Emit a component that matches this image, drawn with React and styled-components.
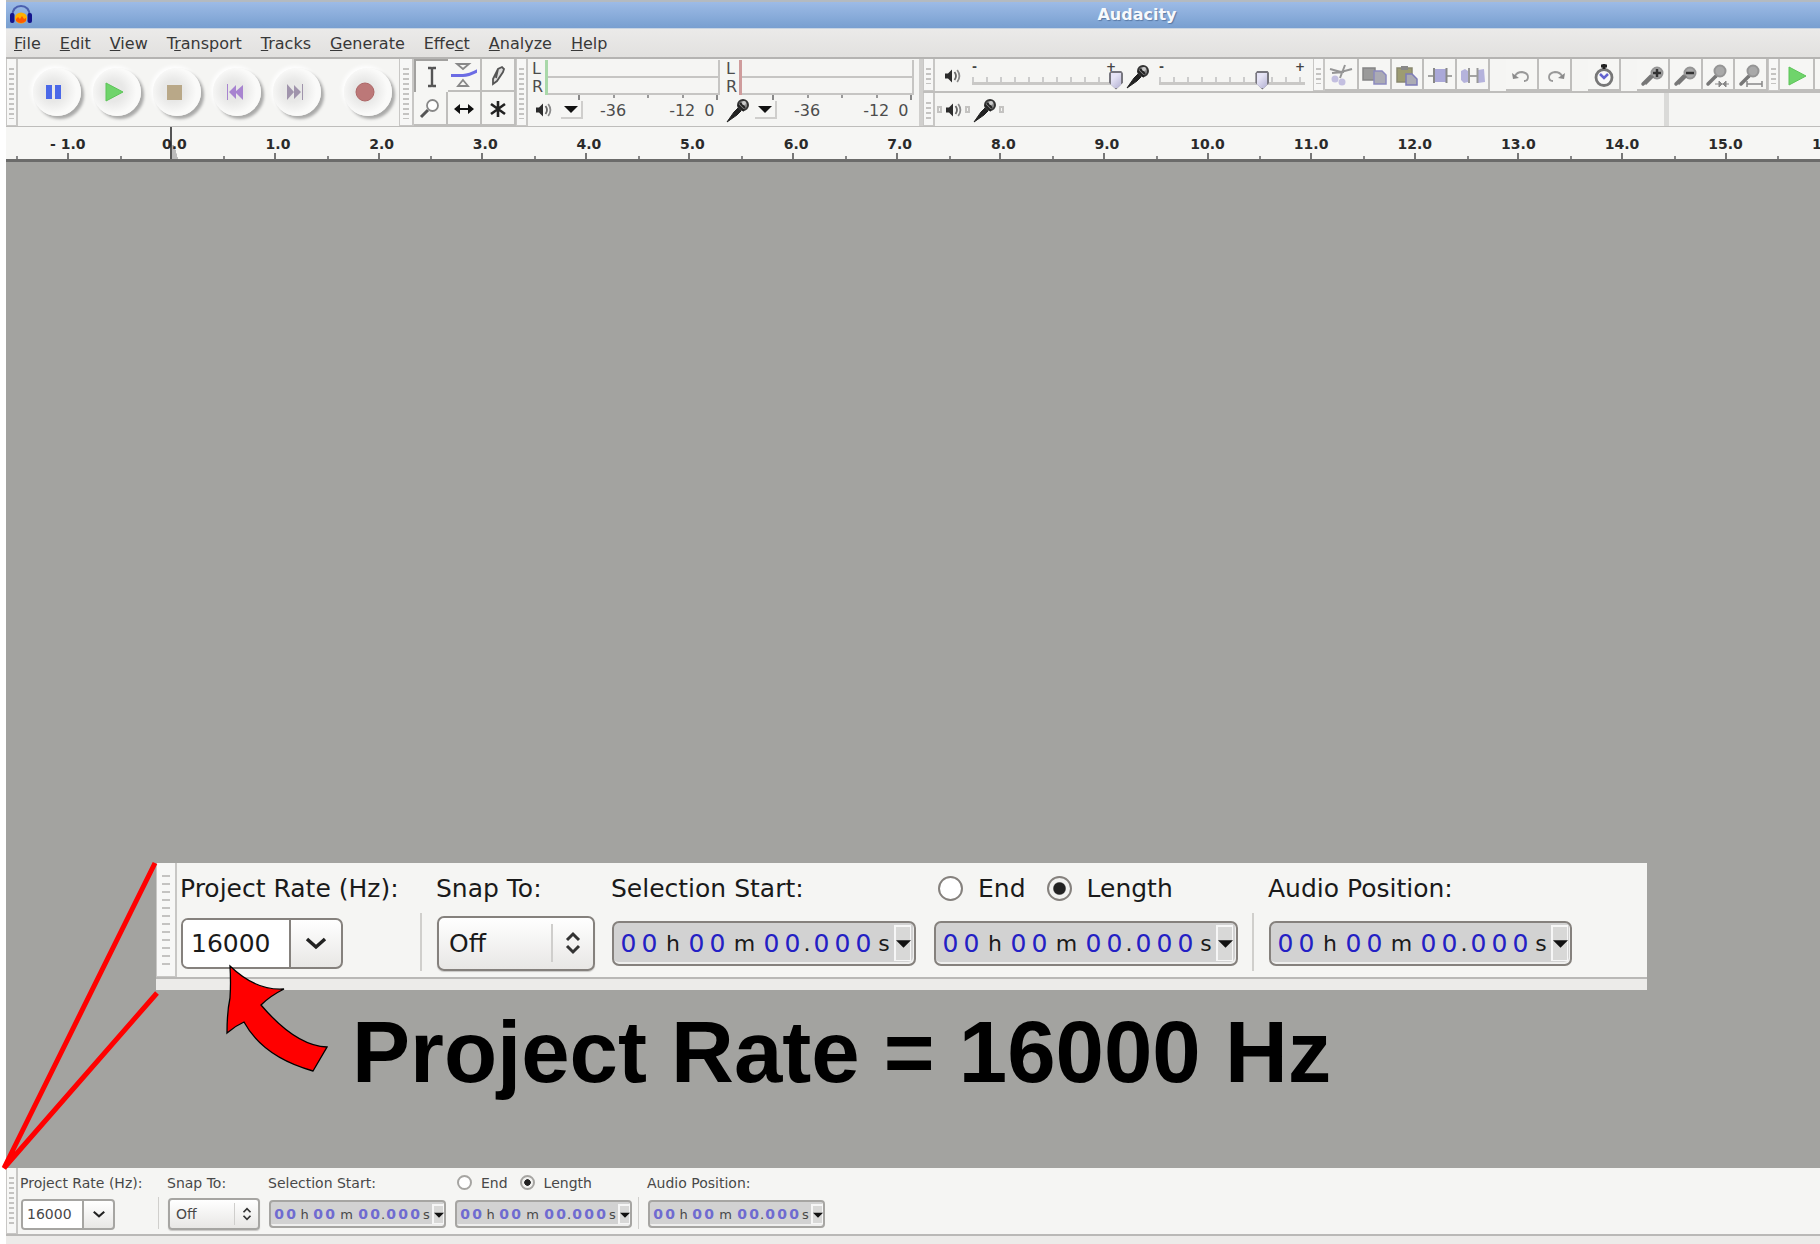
import React from 'react';
import styled, { createGlobalStyle, css, ThemeProvider } from 'styled-components';

const GlobalStyle = createGlobalStyle`
  * {
    box-sizing: border-box;
  }
  body {
    margin: 0;
    background: #fff;
    font-family: "DejaVu Sans", sans-serif;
  }
  button, input, select {
    font-family: inherit;
    color: inherit;
    margin: 0;
    padding: 0;
  }
  svg {
    display: block;
    flex: none;
  }
`;

// sizes for the docked selection bar and its enlarged copy
const small = {
  font: 14, unit: 13, text: '#484848', blue: '#6f6bd0', weight: 'bold', edge: '#a6a5a2',
  grip: 12, gripInset: 2, pad: 2, labelRow: 29, controlRow: 34, body: 66, status: 8,
  rate: 138, snap: 101, start: 186, length: 184, gap: 8, line: 1,
  combo: 94, comboH: 31, comboBtn: 31, select: 92, selectH: 32, selectIcon: 24, inset: 5,
  time: 177, timeH: 28, timePad: 2, digit: 12, h: 15, m: 21, dot: 4, s: 11, timeBtn: 12,
  radio: 15, radioPad: 3, radioGap: 9, radioSpace: 12, radius: 4, icon: 14,
};

const large = {
  font: 25, unit: 22, text: '#1a1a1a', blue: '#2420c4', weight: 'normal', edge: '#85817d',
  grip: 21, gripInset: 5, pad: 3, labelRow: 50, controlRow: 60, body: 114, status: 11,
  rate: 240, snap: 175, start: 322, length: 319, gap: 14, line: 2,
  combo: 162, comboH: 51, comboBtn: 52, select: 158, selectH: 55, selectIcon: 42, inset: 9,
  time: 304, timeH: 45, timePad: 4, digit: 21, h: 26, m: 33, dot: 8, s: 20, timeBtn: 17,
  radio: 25, radioPad: 5, radioGap: 15, radioSpace: 21, radius: 7, icon: 24,
};

/* ---------- icons ---------- */

const Speaker = () => (
  <svg width="18" height="16" viewBox="0 0 18 16">
    <path d="M1 5.500h3L8 1.500v13L4 10.500H1z" fill="#2b2b2b" />
    <path d="M10.500 4q3 4 0 8" fill="none" stroke="#666" strokeWidth="1.800" />
    <path d="M13.200 2q4.400 6 0 12" fill="none" stroke="#8b8b8b" strokeWidth="1.800" />
  </svg>
);

const Mic = () => (
  <svg width="24" height="26" viewBox="0 0 24 26">
    <path d="M1 25L8 15l4-4 3 3-4 4z" fill="#222" stroke="#222" />
    <circle cx="17" cy="8" r="5" fill="#888" stroke="#333" strokeWidth="2" />
    <path d="M12 8l6 6M14 6l5 5" stroke="#222" strokeWidth="2" />
    <circle cx="18" cy="6" r="2" fill="#ccc" />
  </svg>
);

const Lens = ({ sign, foot }) => (
  <svg width="26" height="26" viewBox="0 0 26 26">
    <path d="M3 21l8-8" stroke="#777" strokeWidth="3.500" strokeLinecap="round" />
    <circle cx={sign ? 17 : 15} cy={sign ? 10 : 8} r="5.500" fill="#a9a9a9" stroke="#959595" strokeWidth="2" />
    {sign && <path d="M5 21l8-8" stroke="#777" strokeWidth="3" />}
    {sign && <path d="M13 10h8" stroke="#333" strokeWidth="2.500" />}
    {sign === 'plus' && <path d="M17 6v8" stroke="#333" strokeWidth="2.500" />}
    {foot === 'in' && <path d="M10 21h14M14 18l3 3-3 3zM21 18l-3 3 3 3z" stroke="#888" fill="#888" />}
    {foot === 'out' && <path d="M9 21h15M9 18v6M24 18v6" stroke="#888" strokeWidth="1.500" fill="none" />}
  </svg>
);

const Logo = () => (
  <svg width="24" height="20" viewBox="0 0 24 20">
    <path d="M3 11Q4 1 12 1t9 10" fill="none" stroke="#4a5fae" strokeWidth="2" />
    <ellipse cx="12" cy="13" rx="6" ry="5.500" fill="#ffb000" />
    <path d="M7 14l2-2 2 2 2-3 2 3 2-1v3q-5 4-10 0z" fill="#ff5a00" />
    <rect x="1" y="8" width="4.500" height="10" rx="2" fill="#14148c" />
    <rect x="18.500" y="8" width="4.500" height="10" rx="2" fill="#14148c" />
  </svg>
);

const transportIcons = {
  Pause: <path d="M3 4h6v14H3zM12 4h6v14h-6z" fill="#4a68e8" />,
  Play: <path d="M3 2v18l17-9z" fill="#6fd46b" stroke="#5cc458" />,
  Stop: <path d="M4 4h15v15H4z" fill="#b9a888" />,
  'Skip to Start': (
    <g fill="#a884d0">
      <path d="M4 3h1v16H4zM13 4v14l-7-7zM20 4v15l-8-8z" />
    </g>
  ),
  'Skip to End': (
    <g fill="#a094ac">
      <path d="M4 3v16l7-8zM11 4v14l7-7zM19 3h1v16h-1z" />
    </g>
  ),
  Record: <circle cx="11" cy="11" r="9" fill="#bc7878" stroke="#ad6666" />,
};

const toolIcons = {
  'Selection Tool': <path d="M9 4h3l1 1 1-1h3M9 22h3l1-1 1 1h3M13 5v16" stroke="#555" strokeWidth="2.400" fill="none" />,
  'Envelope Tool': (
    <g fill="none">
      <path d="M6 2h12l-6 5zM12 18l5 6H7z" stroke="#888" strokeWidth="1.800" />
      <path d="M-2 13.500h14q6 0 15-5" stroke="#6c6ce4" strokeWidth="3" />
    </g>
  ),
  'Draw Tool': <path d="M8 22v-5l5-10 4-2 2 2-1 3-6 9zM13 7l-2 9" stroke="#555" strokeWidth="1.800" fill="#ddd" />,
  'Zoom Tool': (
    <g>
      <path d="M4 22l7-7" stroke="#555" strokeWidth="3" />
      <circle cx="15.500" cy="10.500" r="5.500" fill="#fff" stroke="#888" strokeWidth="1.800" />
    </g>
  ),
  'Time Shift Tool': <path d="M3 14l6-5v4h8V9l6 5-6 5v-4H9v4z" fill="#111" />,
  'Multi-Tool': <path d="M13 6v16M6 9l14 10M20 9L6 19" stroke="#222" strokeWidth="2.600" />,
};

const editIcons = {
  Cut: (
    <g>
      <path d="M2 6l11 3 11-3M17 2l-5 13M4 10l12-1" stroke="#969696" strokeWidth="2" fill="none" />
      <circle cx="7" cy="16" r="3.500" fill="#c3bfe0" />
      <circle cx="14" cy="19" r="3.500" fill="#c3bfe0" />
    </g>
  ),
  Copy: (
    <g strokeWidth="1.500">
      <path d="M1 5h12v12H1z" fill="#9a9a9a" stroke="#858585" />
      <path d="M12 8h8l4 4v9H12z" fill="#ababb4" stroke="#8c8abf" />
    </g>
  ),
  Paste: (
    <g strokeWidth="1.500">
      <path d="M3 5h15v14H3z" fill="#9d9c72" stroke="#8a8970" />
      <path d="M7 3h7v4H7z" fill="#888" />
      <path d="M12 11h6l5 5v6H12z" fill="#ababb4" stroke="#7e7cb8" />
    </g>
  ),
  Trim: (
    <g>
      <path d="M1 13h24" stroke="#888" strokeWidth="1.500" />
      <path d="M8 6h11v13H8z" fill="#aaa8d8" />
      <path d="M7 5v15M19.500 5v15" stroke="#888" strokeWidth="2" />
    </g>
  ),
  Silence: (
    <g>
      <path d="M1 8l4-2 3 2v11l-4 1-3-3zM18 7l6-1 1 13-7 1z" fill="#b5b3dc" />
      <path d="M9 13h8" stroke="#888" strokeWidth="1.500" />
      <path d="M9 5v15M17.500 5v15" stroke="#999" strokeWidth="2" />
    </g>
  ),
  Undo: (
    <g>
      <path d="M6 13q2-4 7-4 6 1 6 5t-4 4" stroke="#999" strokeWidth="1.800" fill="none" />
      <path d="M3 10l1 6 6-1z" fill="#8a8a8a" />
    </g>
  ),
  Redo: (
    <g>
      <path d="M20 13q-2-4-7-4-6 1-6 5t4 4" stroke="#999" strokeWidth="1.800" fill="none" />
      <path d="M23 10l-1 6-6-1z" fill="#8a8a8a" />
    </g>
  ),
  'Sync-Lock': (
    <g>
      <circle cx="13" cy="14.500" r="8" fill="#fafafa" stroke="#777" strokeWidth="2.800" />
      <path d="M13 1v5M10 3h6" stroke="#222" strokeWidth="3" />
      <path d="M9 11l4 4 4-4" stroke="#6464d0" strokeWidth="2.500" fill="none" />
    </g>
  ),
};

/* ---------- window frame ---------- */

const Window = styled.div`
  min-height: 100vh;
  display: flex;
  flex-direction: column;
  padding-left: 6px;
  overflow: hidden;
`;

const TitleBar = styled.header`
  display: flex;
  align-items: center;
  height: 29px;
  padding-left: 3px;
  border-top: 2px solid #b4bac0;
  border-bottom: 1px solid #c8d4e2;
  background: linear-gradient(#9dbbe6, #789fd0);
`;

const Title = styled.h1`
  flex: 1;
  margin: 0 0 0 421px;
  font-size: 16px;
  line-height: 24px;
  text-align: center;
  color: #f7f9fc;
  text-shadow: 1px 1px 1px #5878a4;
`;

const MenuBar = styled.nav`
  display: flex;
  gap: 19px;
  height: 30px;
  padding-left: 8px;
  background: linear-gradient(#ebeae9, #e2e1df);
  border-bottom: 2px solid #b5b4b2;
`;

const MenuItem = styled.button`
  border: 0;
  padding-top: 2px;
  background: none;
  font-size: 16px;
  line-height: 26px;
  color: #383838;
  white-space: nowrap;
`;

const Toolbars = styled.div`
  display: flex;
  height: 68px;
  background: #f5f5f3;
  border-bottom: 1px solid #bebdbb;
  overflow: hidden;
`;

const Grip = styled.div`
  flex: none;
  width: ${p => p.$width || 12}px;
  padding: 6px ${p => p.$inset || 2}px;
  border: 1px solid #c8c7c5;
  border-width: 0 2px 1px 1px;
  background: repeating-linear-gradient(#f7f7f6 0 ${p => p.$step - 2 || 3}px, #c4c3c1 0 ${p => p.$step || 5}px) content-box, #f7f7f6;
`;

const Transport = styled.div`
  display: flex;
  flex: none;
  align-items: center;
  width: 381px;
  padding: 0 0 1px 9px;
`;

const RoundButton = styled.button`
  display: grid;
  place-items: center;
  width: 48px;
  height: 48px;
  margin: 0 6px;
  padding-right: 6px;
  border: 0;
  border-radius: 50%;
  background: radial-gradient(circle at 42% 48%, #e8e8e7 0 28%, #fafaf9 62%);
  box-shadow: 3px 3px 3px #a9a9a8, -2px -2px 4px #fff;

  &:last-child {
    margin-left: 17px;
  }
`;

const ToolGrid = styled.div`
  display: grid;
  flex: none;
  grid-template-columns: repeat(3, 34px);
  grid-template-rows: 33px 34px;
`;

const ToolButton = styled.button`
  display: grid;
  flex: none;
  place-items: center;
  width: ${p => p.$width || 34}px;
  border: 0 solid #bfbebc;
  border-width: 0 2px 2px 0;
  background: #f6f6f4;
  overflow: hidden;

  ${p => p.$pressed && css`
    border-width: 2px 0 0 2px;
    border-color: #a2a19f;
  `}
`;

/* ---------- meters ---------- */

const Meter = styled.div`
  display: grid;
  flex: none;
  grid-template-columns: 16px 172px;
  grid-template-rows: 18px 17px 30px;
  width: 194px;
  padding: 1px 0 0 4px;
  color: #4c4c4c;
  font-size: 16px;
`;

const Channel = styled.span`
  line-height: 17px;
  border-right: 3px solid ${p => p.$color};
`;

const Level = styled.div`
  border: 1px solid #c6c5c3;
  border-width: 0 2px 2px 0;
`;

const Scale = styled.div`
  grid-column: 1 / -1;
  display: flex;
  align-items: center;
  gap: 5px;
  background:
    linear-gradient(#888, #888) 46px 0 / 2px 5px no-repeat,
    linear-gradient(#999, #999) 81px 0 / 2px 3px no-repeat,
    linear-gradient(#999, #999) 115px 0 / 2px 3px no-repeat,
    linear-gradient(#999, #999) 150px 0 / 2px 3px no-repeat,
    linear-gradient(#888, #888) 184px 0 / 2px 5px no-repeat;
`;

const IconSlot = styled.span`
  display: grid;
  place-items: center;
  width: 24px;
`;

const DropButton = styled.button`
  display: grid;
  place-items: center;
  width: 22px;
  height: 18px;
  border: 0 solid #cfcecc;
  border-width: 0 2px 2px 0;
  background: #f6f6f4;
`;

const ScaleText = styled.span`
  margin-left: ${p => p.$gap}px;
`;

/* ---------- mixer and editing rows ---------- */

const Rows = styled.div`
  flex: 1;
  min-width: 0;
  display: grid;
  grid-template-rows: 34px 33px;
  margin-left: 3px;
  border-left: 4px solid #d0cfcd;
`;

const Row = styled.div`
  display: flex;
  min-width: 0;
  overflow: hidden;
  border-bottom: ${p => p.$line ? '2px solid #bfbebc' : 0};

  ${ToolButton} {
    padding-top: 3px;
  }
`;

const Mixer = styled.div`
  display: flex;
  align-items: center;
  flex: none;
  width: 378px;
  padding: 2px 0 0 9px;
`;

const SliderBox = styled.div`
  display: flex;
  flex-direction: column;
  width: ${p => p.$width}px;
  margin: 0 ${p => p.$after}px 0 ${p => p.$gap}px;
`;

const SliderSigns = styled.div`
  display: flex;
  justify-content: space-between;
  height: 8px;
  padding-right: ${p => p.$right}px;
  font-size: 12px;
  font-weight: bold;
  line-height: 8px;
  color: #444;
`;

const Slider = styled.input`
  appearance: none;
  width: 100%;
  height: 19px;
  background:
    linear-gradient(#c9c8c6, #c9c8c6) 0 11px / ${p => p.$track}px 3px no-repeat,
    repeating-linear-gradient(90deg, #ccc 0 2px, transparent 0 14px) 0 6px / ${p => p.$track}px 5px no-repeat;

  &::-webkit-slider-thumb {
    appearance: none;
    width: 14px;
    height: 19px;
    background: linear-gradient(135deg, #e6e4f6 30%, #b4b2d2) content-box, #77767e;
    padding: 2px;
    clip-path: polygon(15% 0, 85% 0, 100% 15%, 100% 65%, 50% 100%, 0 65%, 0 15%);
  }
`;

const Gap = styled.div`
  flex: none;
  width: 16px;
`;

const Notch = styled.span`
  width: 5px;
  height: 7px;
  margin: 0 3px 0 2px;
  border: 2px solid #c4c3c1;
`;

const Devices = styled.div`
  display: flex;
  align-items: center;
  flex: none;
  width: 734px;
  border-right: 5px solid #dadad8;
`;

/* ---------- ruler ---------- */

const Ruler = styled.div`
  height: 35px;
  overflow: hidden;
  background: #f6f6f4;
  border-bottom: 3px solid #6b6b6a;
`;

const RulerCells = styled.div`
  display: grid;
  grid-template-columns: repeat(18, 1fr);
  height: 32px;
  margin: 0 -61px 0 10px;
`;

const RulerCell = styled.div`
  padding: 8px 0 0 ${p => p.$shift ? 6 : 0}px;
  text-align: center;
  font-size: 14px;
  font-weight: bold;
  line-height: 18px;
  color: #2a2a2a;
  background:
    linear-gradient(#888, #888) 0 100% / 2px 3px no-repeat,
    linear-gradient(#777, #777) 50% 100% / 2px 6px no-repeat;

  ${p => p.$cursor && css`
    background:
      linear-gradient(#888, #888) 0 100% / 2px 3px no-repeat,
      linear-gradient(#555, #555) 50% 0 / 2px 100% no-repeat,
      linear-gradient(75deg, #bbb 50%, transparent 52%) calc(50% + 5px) 100% / 8px 14px no-repeat;
  `}
`;

/* ---------- project area ---------- */

const Canvas = styled.main`
  position: relative;
  flex: 1;
  display: flex;
  flex-direction: column;
  justify-content: flex-end;
  background: #a3a3a0;
`;

const Callout = styled.section`
  margin: 0 173px 0 150px;
`;

const Caption = styled.h2`
  margin: 18px 0 72px 346px;
  font: bold 87px/88px "Liberation Sans", sans-serif;
  color: #000;
  white-space: nowrap;
`;

const Annotations = styled.svg`
  position: absolute;
  left: -6px;
  bottom: -4px;
  z-index: 1;
  pointer-events: none;
`;

/* ---------- selection bar ---------- */

const SelectionRow = styled.div`
  display: flex;
  height: ${p => p.theme.body}px;
  background: #f5f5f3;
  font-size: ${p => p.theme.font}px;
  color: ${p => p.theme.text};
`;

const StatusBar = styled.div`
  height: ${p => p.theme.status + 2}px;
  background: #ecebe9;
  border-top: 2px solid #b9b8b6;
`;

const Column = styled.div`
  flex: none;
  width: ${p => p.theme[p.$size]}px;

  &:nth-child(2) {
    margin-left: ${p => p.theme.pad}px;
  }
`;

const LabelRow = styled.div`
  display: flex;
  align-items: center;
  height: ${p => p.theme.labelRow}px;
  white-space: nowrap;
`;

const ControlRow = styled.div`
  display: flex;
  align-items: center;
  height: ${p => p.theme.controlRow}px;
  padding-left: 1px;
`;

const Divider = styled.div`
  flex: none;
  width: ${p => p.theme.line}px;
  height: ${p => p.theme.controlRow - 2}px;
  margin: ${p => p.theme.labelRow}px ${p => p.theme.gap}px 0 0;
  background: #d0cfcc;
`;

const Framed = styled.div`
  display: flex;
  height: ${p => p.theme.comboH}px;
  border: 2px solid ${p => p.theme.edge};
  border-radius: ${p => p.theme.radius}px;
  overflow: hidden;
  background: linear-gradient(#fff, #e8e7e5);
`;

const Combo = styled(Framed)`
  width: ${p => p.theme.combo}px;
`;

const ComboInput = styled.input`
  flex: 1;
  min-width: 0;
  padding-left: ${p => p.theme.inset - 1}px;
  border: 0;
  border-right: 2px solid ${p => p.theme.edge};
  background: #fff;
  font-size: ${p => p.theme.font}px;
`;

const ComboButton = styled.button`
  display: grid;
  place-items: center;
  width: ${p => p.theme.comboBtn - 2}px;
  border: 0;
  background: none;
`;

const SelectFrame = styled(Framed)`
  align-items: center;
  width: ${p => p.theme.select}px;
  height: ${p => p.theme.selectH}px;
  box-shadow: 0 1px 1px #c8c7c5;
`;

const Select = styled.select`
  appearance: none;
  flex: 1;
  min-width: 0;
  height: 100%;
  padding-left: ${p => p.theme.inset + 1}px;
  border: 0;
  background: none;
  font-size: ${p => p.theme.font}px;
`;

const SelectIcon = styled.span`
  display: grid;
  place-items: center;
  width: ${p => p.theme.selectIcon}px;
  height: 76%;
  border-left: ${p => p.theme.line}px solid #cfcecc;
`;

const TimeBox = styled.div`
  display: flex;
  align-items: center;
  width: ${p => p.theme.time}px;
  height: ${p => p.theme.timeH}px;
  padding-left: ${p => p.theme.timePad}px;
  border: 2px solid ${p => p.theme.edge};
  border-radius: ${p => p.theme.radius}px;
  background: #d2d2d2;
  box-shadow: inset -1px -2px 0 #efefee;
`;

const Unit = styled.span`
  flex: none;
  width: ${p => p.theme[p.$size]}px;
  text-align: center;
  font-size: ${p => p.theme.unit}px;

  ${p => p.$size === 'digit' && css`
    font-size: ${p.theme.font}px;
    font-weight: ${p.theme.weight};
    color: ${p.theme.blue};
  `}
`;

const TimeButton = styled.button`
  display: grid;
  place-items: center;
  flex: none;
  width: ${p => p.theme.timeBtn}px;
  height: 86%;
  border: 1px solid #f6f6f6;
  border-width: 2px 1px 1px 2px;
  background: #d8d8d7;
`;

const RadioLabel = styled.label`
  display: flex;
  align-items: center;
  gap: ${p => p.theme.radioGap}px;
  margin-left: ${p => p.theme.radioPad}px;

  &:last-child {
    margin-left: ${p => p.theme.radioSpace}px;
  }
`;

const Radio = styled.input`
  appearance: none;
  flex: none;
  width: ${p => p.theme.radio}px;
  height: ${p => p.theme.radio}px;
  border: 2px solid ${p => p.theme.edge};
  border-radius: 50%;
  background: #fff;

  &:checked {
    background: radial-gradient(circle, #222 0 38%, #f2f2f0 46%);
  }
`;

const Chevron = ({ size }) => (
  <svg width={size} height={size} viewBox="0 0 24 24">
    <path d="M3 8l9 8 9-8" fill="none" stroke="#222" strokeWidth="3.500" />
  </svg>
);

const UpDown = ({ size }) => (
  <svg width={size} height={size} viewBox="0 0 24 24">
    <path d="M6 9l6-6 6 6M6 15l6 6 6-6" fill="none" stroke="#333" strokeWidth="3" />
  </svg>
);

const Triangle = ({ width }) => (
  <svg width={width} height={width} viewBox="0 0 14 14">
    <path d="M0 4h14l-7 7z" fill="#111" />
  </svg>
);

const unitSizes = { h: 'h', m: 'm', s: 's', '.': 'dot' };

function TimeField({ label, sizes }) {
  return (
    <TimeBox role="group" aria-label={label}>
      {'00h00m00.000s'.split('').map((ch, i) => (
        <Unit key={i} $size={unitSizes[ch] || 'digit'}>{ch}</Unit>
      ))}
      <TimeButton aria-label={`${label} format`}>
        <Triangle width={sizes.timeBtn - 2} />
      </TimeButton>
    </TimeBox>
  );
}

function SelectionBar({ sizes, name }) {
  return (
    <ThemeProvider theme={sizes}>
      <SelectionRow>
        <Grip $width={sizes.grip} $inset={sizes.gripInset} $step={sizes === large ? 8 : 5} />
        <Column $size="rate">
          <LabelRow as="label" htmlFor={`${name}-rate`}>Project Rate (Hz):</LabelRow>
          <ControlRow>
            <Combo>
              <ComboInput id={`${name}-rate`} defaultValue="16000" />
              <ComboButton aria-label="Rates"><Chevron size={sizes.icon} /></ComboButton>
            </Combo>
          </ControlRow>
        </Column>
        <Divider />
        <Column $size="snap">
          <LabelRow as="label" htmlFor={`${name}-snap`}>Snap To:</LabelRow>
          <ControlRow>
            <SelectFrame>
              <Select id={`${name}-snap`}>
                <option>Off</option>
              </Select>
              <SelectIcon><UpDown size={sizes.icon} /></SelectIcon>
            </SelectFrame>
          </ControlRow>
        </Column>
        <Column $size="start">
          <LabelRow>Selection Start:</LabelRow>
          <ControlRow><TimeField label="Selection Start" sizes={sizes} /></ControlRow>
        </Column>
        <Column $size="length">
          <LabelRow>
            <RadioLabel><Radio type="radio" name={`${name}-mode`} />End</RadioLabel>
            <RadioLabel><Radio type="radio" name={`${name}-mode`} defaultChecked />Length</RadioLabel>
          </LabelRow>
          <ControlRow><TimeField label="Length" sizes={sizes} /></ControlRow>
        </Column>
        <Divider />
        <Column $size="time">
          <LabelRow>Audio Position:</LabelRow>
          <ControlRow><TimeField label="Audio Position" sizes={sizes} /></ControlRow>
        </Column>
      </SelectionRow>
      <StatusBar />
    </ThemeProvider>
  );
}

/* ---------- toolbars ---------- */

const menus = [
  ['', 'F', 'ile'], ['', 'E', 'dit'], ['', 'V', 'iew'], ['T', 'r', 'ansport'], ['', 'T', 'racks'],
  ['', 'G', 'enerate'], ['Effe', 'c', 't'], ['', 'A', 'nalyze'], ['', 'H', 'elp'],
];

function IconButton({ name, width, pressed, children }) {
  return (
    <ToolButton aria-label={name} $width={width} $pressed={pressed}>
      {children || (
        <svg width="26" height="26" viewBox="0 0 26 26">{toolIcons[name] || editIcons[name]}</svg>
      )}
    </ToolButton>
  );
}

function LevelMeter({ color, icon, label }) {
  return (
    <Meter>
      <Channel $color={color}>L</Channel>
      <Level />
      <Channel $color={color}>R</Channel>
      <Level />
      <Scale>
        <IconSlot>{icon}</IconSlot>
        <DropButton aria-label={label}><Triangle width={14} /></DropButton>
        <ScaleText $gap={12}>-36</ScaleText>
        <ScaleText $gap={38}>-12</ScaleText>
        <ScaleText $gap={4}>0</ScaleText>
      </Scale>
    </Meter>
  );
}

function VolumeSlider({ label, value, width, track, gap, after, right }) {
  return (
    <SliderBox $width={width} $gap={gap} $after={after}>
      <SliderSigns $right={right}><span>-</span><span>+</span></SliderSigns>
      <Slider type="range" aria-label={label} defaultValue={value} $track={track} />
    </SliderBox>
  );
}

function App() {
  const seconds = Array.from({ length: 18 }, (_, i) => i - 1);

  return (
    <>
      <GlobalStyle />
      <Window>
        <TitleBar>
          <Logo />
          <Title>Audacity</Title>
        </TitleBar>
        <MenuBar>
          {menus.map(([before, key, after]) => (
            <MenuItem key={before + key + after}>{before}<u>{key}</u>{after}</MenuItem>
          ))}
        </MenuBar>

        <Toolbars>
          <Grip />
          <Transport>
            {Object.keys(transportIcons).map(name => (
              <RoundButton key={name} aria-label={name}>
                <svg width="22" height="22" viewBox="0 0 22 22">{transportIcons[name]}</svg>
              </RoundButton>
            ))}
          </Transport>
          <Grip $width={15} $inset={3} />
          <ToolGrid>
            {Object.keys(toolIcons).map((name, i) => (
              <IconButton key={name} name={name} pressed={i === 0} />
            ))}
          </ToolGrid>
          <Grip />
          <LevelMeter color="#a9d8a9" icon={<Speaker />} label="Playback meter" />
          <LevelMeter color="#cf9c9c" icon={<Mic />} label="Recording meter" />
          <Rows>
            <Row $line>
              <Grip />
              <Mixer>
                <Speaker />
                <VolumeSlider label="Playback volume" value={100} width={151} track={140} gap={10} after={3} right={7} />
                <Mic />
                <VolumeSlider label="Recording volume" value={73} width={146} track={146} gap={9} after={0} right={0} />
              </Mixer>
              <Grip />
              <IconButton name="Cut" />
              <IconButton name="Copy" width={33} />
              <IconButton name="Paste" width={32} />
              <IconButton name="Trim" width={33} />
              <IconButton name="Silence" width={33} />
              <Gap />
              <IconButton name="Undo" width={33} />
              <IconButton name="Redo" width={33} />
              <Gap />
              <IconButton name="Sync-Lock" width={33} />
              <Gap />
              <IconButton name="Zoom In" width={33}><Lens sign="plus" /></IconButton>
              <IconButton name="Zoom Out" width={33}><Lens sign="minus" /></IconButton>
              <IconButton name="Fit Selection" width={32}><Lens foot="in" /></IconButton>
              <IconButton name="Fit Project" width={33}><Lens foot="out" /></IconButton>
              <Grip />
              <IconButton name="Play at Speed" width={35}>
                <svg width="22" height="22" viewBox="0 0 22 22">{transportIcons.Play}</svg>
              </IconButton>
              <IconButton name="Speed" />
            </Row>
            <Row>
              <Grip />
              <Devices>
                <Notch /><Speaker /><Notch /><Mic /><Notch />
              </Devices>
            </Row>
          </Rows>
        </Toolbars>

        <Ruler>
          <RulerCells>
            {seconds.map(n => (
              <RulerCell key={n} $shift={n >= 0 && n < 10} $cursor={n === 0}>
                {n < 0 ? `- ${-n}.0` : `${n}.0`}
              </RulerCell>
            ))}
          </RulerCells>
        </Ruler>

        <Canvas>
          <Callout>
            <SelectionBar sizes={large} name="zoomed" />
          </Callout>
          <Caption>Project Rate = 16000 Hz</Caption>
          <Annotations width="340" height="312" viewBox="0 860 340 312">
            <path d="M155 863L4 1168 157 993" fill="none" stroke="#f00" strokeWidth="5" strokeLinejoin="bevel" />
            <path
              d="M230 966Q256 991 284 989Q270 996 261 1005Q296 1046 327 1047L313 1071Q263 1057 244 1022Q235 1026 227 1033Q227 1012 230 998Q231 983 230 966z"
              fill="#f00" stroke="#000" strokeWidth="1.300"
            />
          </Annotations>
        </Canvas>

        <SelectionBar sizes={small} name="docked" />
      </Window>
    </>
  );
}

export default App;
